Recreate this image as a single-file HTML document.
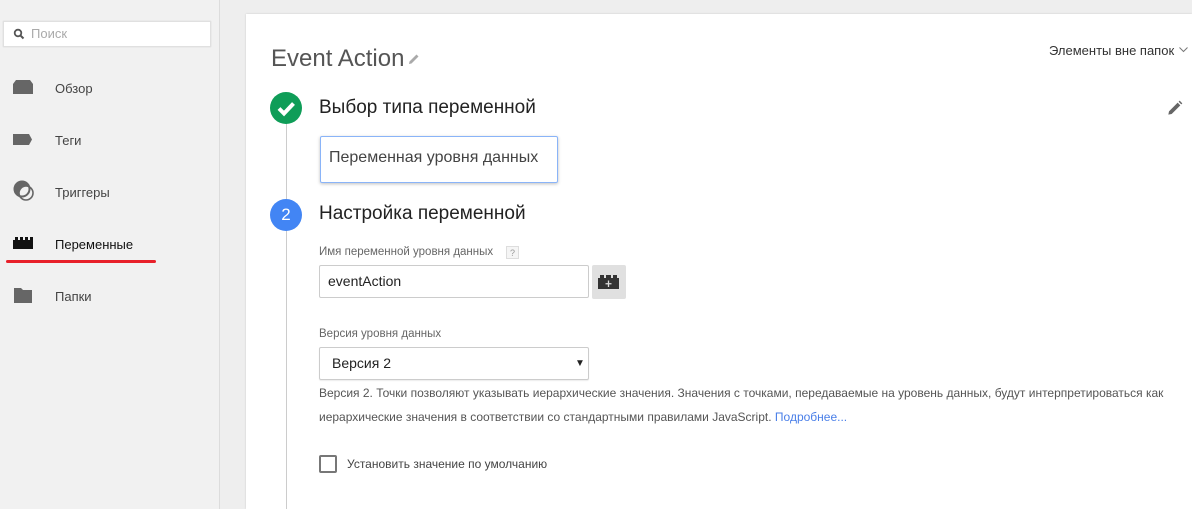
<!DOCTYPE html>
<html><head><meta charset="utf-8"><style>
*{box-sizing:border-box;margin:0;padding:0}
body{width:1192px;height:509px;overflow:hidden;background:#eeeeee;font-family:"Liberation Sans",Arial,sans-serif;position:relative;color:#212121}
.side{position:absolute;left:0;top:0;width:220px;height:509px;background:#f1f1f1;border-right:1px solid #dcdcdc}
.search{position:absolute;left:3px;top:21px;width:208px;height:26px;background:#fff;border:1px solid #e0e0e0;box-shadow:0 0 1px #ccc}
.search span{position:absolute;left:27px;top:4px;font-size:13px;color:#aaa}
.nav{position:absolute;left:55px;font-size:13px;color:#444}
.ico{position:absolute;left:13px}
.panel{position:absolute;left:246px;top:14px;width:946px;height:495px;background:#fff;box-shadow:0 0 2px rgba(0,0,0,.15)}
.abs{position:absolute}
</style></head><body>
<div class="side">
 <div class="search"><svg class="abs" style="left:9px;top:6px" width="12" height="12" viewBox="0 0 12 12"><circle cx="5" cy="5" r="3.3" fill="none" stroke="#555" stroke-width="1.8"/><path d="M7.3 7.3L10.5 10.5" stroke="#555" stroke-width="2"/></svg><span>Поиск</span></div>
 <svg class="ico" style="top:80px" width="20" height="14"><path d="M3 0H17L20 4V14H0V4Z" fill="#666"/></svg>
 <div class="nav" style="top:81px">Обзор</div>
 <svg class="ico" style="top:134px" width="20" height="11"><path d="M0 0H16L19 5.5L16 11H0Z" fill="#666"/></svg>
 <div class="nav" style="top:133px">Теги</div>
 <svg class="ico" style="top:180px" width="22" height="22"><circle cx="9" cy="9" r="7.5" fill="none" stroke="#666" stroke-width="2"/><circle cx="13" cy="13" r="7" fill="none" stroke="#666" stroke-width="1.6"/><path d="M9 1.5A7.5 7.5 0 0 0 6.5 16 7 7 0 0 1 16 6.5 7.5 7.5 0 0 0 9 1.5Z" fill="#666"/></svg>
 <div class="nav" style="top:185px">Триггеры</div>
 <svg class="ico" style="top:237px" width="20" height="12"><path d="M0 3H2V0H5V3H7V0H10V3H12V0H15V3H17V0H20V12H0Z" fill="#111"/></svg>
 <div class="nav" style="top:237px;color:#111">Переменные</div>
 <div class="abs" style="left:6px;top:260px;width:150px;height:3px;background:#e8202a;border-radius:2px"></div>
 <svg class="ico" style="top:288px" width="20" height="15"><path d="M1 0H8L10 2H19V15H1Z" fill="#666"/></svg>
 <div class="nav" style="top:289px">Папки</div>
</div>
<div class="panel">
 <div class="abs" style="left:25px;top:31px;font-size:24px;color:#555">Event Action</div>
 <svg class="abs" style="left:162px;top:39px" width="12" height="12" viewBox="0 0 12 12"><path d="M1 11L1.5 8.5L8.5 1.5L10.5 3.5L3.5 10.5Z" fill="#aaa"/></svg>
 <div class="abs" style="left:803px;top:29px;font-size:13px;color:#333">Элементы вне папок</div>
 <svg class="abs" style="left:933px;top:33px" width="9" height="6"><path d="M0.5 0.5L4.5 4.5L8.5 0.5" fill="none" stroke="#777"/></svg>
 <svg class="abs" style="left:921px;top:86px" width="16" height="16" viewBox="0 0 12 12"><path d="M1 11L1.5 8.5L8 2L10 4L3.5 10.5Z M8.7 1.3L9.5 .5L11.5 2.5L10.7 3.3Z" fill="#666"/></svg>
 <div class="abs" style="left:40px;top:109px;width:1px;height:386px;background:#ccc"></div>
 <div class="abs" style="left:24px;top:78px;width:32px;height:32px;border-radius:50%;background:#0f9d58"></div>
 <svg class="abs" style="left:24px;top:78px" width="32" height="32"><path d="M9 16.5L14 21.5L23.5 11.5" fill="none" stroke="#fff" stroke-width="4"/></svg>
 <div class="abs" style="left:73px;top:83px;font-size:19px;color:#222">Выбор типа переменной</div>
 <div class="abs" style="left:74px;top:122px;width:238px;height:47px;border:1px solid #8ab4f8;border-radius:2px;box-shadow:0 1px 3px rgba(0,0,0,.25)"></div>
 <div class="abs" style="left:83px;top:135px;font-size:16px;color:#444">Переменная уровня данных</div>
 <div class="abs" style="left:24px;top:185px;width:32px;height:32px;border-radius:50%;background:#4285f4;color:#fff;font-size:17px;text-align:center;line-height:32px">2</div>
 <div class="abs" style="left:73px;top:189px;font-size:19px;color:#222">Настройка переменной</div>
 <div class="abs" style="left:73px;top:232px;font-size:11.5px;color:#666">Имя переменной уровня данных</div>
 <div class="abs" style="left:260px;top:232px;width:13px;height:13px;border:1px solid #ddd;background:#f5f5f5;font-size:9px;color:#999;text-align:center;line-height:12px">?</div>
 <div class="abs" style="left:73px;top:251px;width:270px;height:33px;border:1px solid #ccc;border-radius:2px"></div>
 <div class="abs" style="left:82px;top:259px;font-size:14px;color:#222">eventAction</div>
 <div class="abs" style="left:346px;top:251px;width:34px;height:34px;background:#e0e0e0;border-radius:2px"></div>
 <svg class="abs" style="left:352px;top:261px" width="22" height="14"><path d="M0 3H2V0H6V3H8V0H13V3H15V0H19V3H21V14H0Z" fill="#333"/><path d="M10.5 5.5V12M7.5 8.75H13.5" stroke="#ddd" stroke-width="1.3"/></svg>
 <div class="abs" style="left:73px;top:314px;font-size:11.5px;color:#666">Версия уровня данных</div>
 <div class="abs" style="left:73px;top:333px;width:270px;height:33px;border:1px solid #ccc;border-radius:2px;box-shadow:0 1px 1px rgba(0,0,0,.08)"></div>
 <div class="abs" style="left:86px;top:341px;font-size:14px;color:#222">Версия 2</div>
 <div class="abs" style="left:329px;top:344px;font-size:10px;color:#222">▼</div>
 <div class="abs" style="left:73px;top:367px;font-size:12px;color:#555;line-height:24px;width:860px">Версия 2. Точки позволяют указывать иерархические значения. Значения с точками, передаваемые на уровень данных, будут интерпретироваться как иерархические значения в соответствии со стандартными правилами JavaScript. <span style="color:#4a7fe8">Подробнее...</span></div>
 <div class="abs" style="left:73px;top:441px;width:18px;height:18px;border:2px solid #777;border-radius:2px"></div>
 <div class="abs" style="left:101px;top:443px;font-size:12px;color:#444">Установить значение по умолчанию</div>
</div>
</body></html>
